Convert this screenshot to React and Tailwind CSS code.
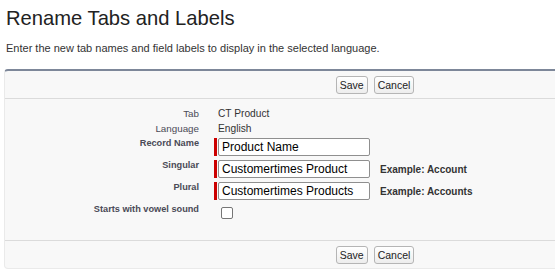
import React from 'react';

const font = { fontFamily: '"Liberation Sans", Arial, sans-serif' };

const Btn = ({ children }) => (
  <button className="h-[18px] px-[3px] rounded-[3px] border border-[#b5b5b5] bg-gradient-to-b from-white to-[#ededed] text-[10.5px] leading-[14px] text-[#222]">
    {children}
  </button>
);

const ButtonBar = () => (
  <div className="flex justify-center gap-[6px]">
    <Btn>Save</Btn>
    <Btn>Cancel</Btn>
  </div>
);

const Label = ({ children, bold = true }) => (
  <div
    className={`w-[209px] shrink-0 pr-[15px] text-right leading-[15px] text-[#4a4a56] ${
      bold ? 'text-[9.2px] font-bold' : 'text-[9.8px]'
    }`}
  >
    {children}
  </div>
);

const TextRow = ({ label, value }) => (
  <div className="flex h-[15px]">
    <Label bold={false}>{label}</Label>
    <div className="pl-[4px] text-[10.2px] leading-[15px] text-[#333]">{value}</div>
  </div>
);

const InputRow = ({ label, value, example }) => (
  <div className="flex h-[22px]">
    <Label>{label}</Label>
    <div className="flex items-center h-[18px] mt-[2px]">
      <span className="w-[3px] h-[18px] bg-[#cc0000] mr-[1px]" />
      <div className="w-[152px] h-[18px] border border-[#8f8f8f] rounded-[2px] bg-white pl-[3px] text-[12px] leading-[16px] text-black whitespace-nowrap">
        {value}
      </div>
      {example && (
        <span className="ml-[10px] text-[10px] font-bold text-[#333]">Example: {example}</span>
      )}
    </div>
  </div>
);

export default function App() {
  return (
    <div className="w-[555px] h-[269px] overflow-hidden bg-white" style={font}>
      <div className="pl-[6px]">
        <h1 className="pt-[5px] text-[20.2px] leading-[26px] text-[#222]">Rename Tabs and Labels</h1>
        <p className="mt-[10px] text-[11px] leading-[15px] text-[#333]">
          Enter the new tab names and field labels to display in the selected language.
        </p>
      </div>

      <div className="mt-[13px] ml-[4px] w-[742px] border-t-2 border-t-[#7d8799] border-x border-b border-[#eaeaea] rounded-[4px] bg-[#f8f8f8]">
        <div className="pt-[5px] pb-[4px] border-b border-[#dbdbdb]">
          <ButtonBar />
        </div>

        <div className="h-[141px] pt-[7px]">
          <TextRow label="Tab" value="CT Product" />
          <TextRow label="Language" value="English" />
          <InputRow label="Record Name" value="Product Name" />
          <InputRow label="Singular" value="Customertimes Product" example="Account" />
          <InputRow label="Plural" value="Customertimes Products" example="Accounts" />
          <div className="flex">
            <Label>Starts with vowel sound</Label>
            <span className="ml-[7px] mt-[5px] w-[12px] h-[12px] border border-[#767676] rounded-[2px] bg-white" />
          </div>
        </div>

        <div className="pt-[5px] pb-[4px] border-t border-[#dbdbdb]">
          <ButtonBar />
        </div>
      </div>
    </div>
  );
}
